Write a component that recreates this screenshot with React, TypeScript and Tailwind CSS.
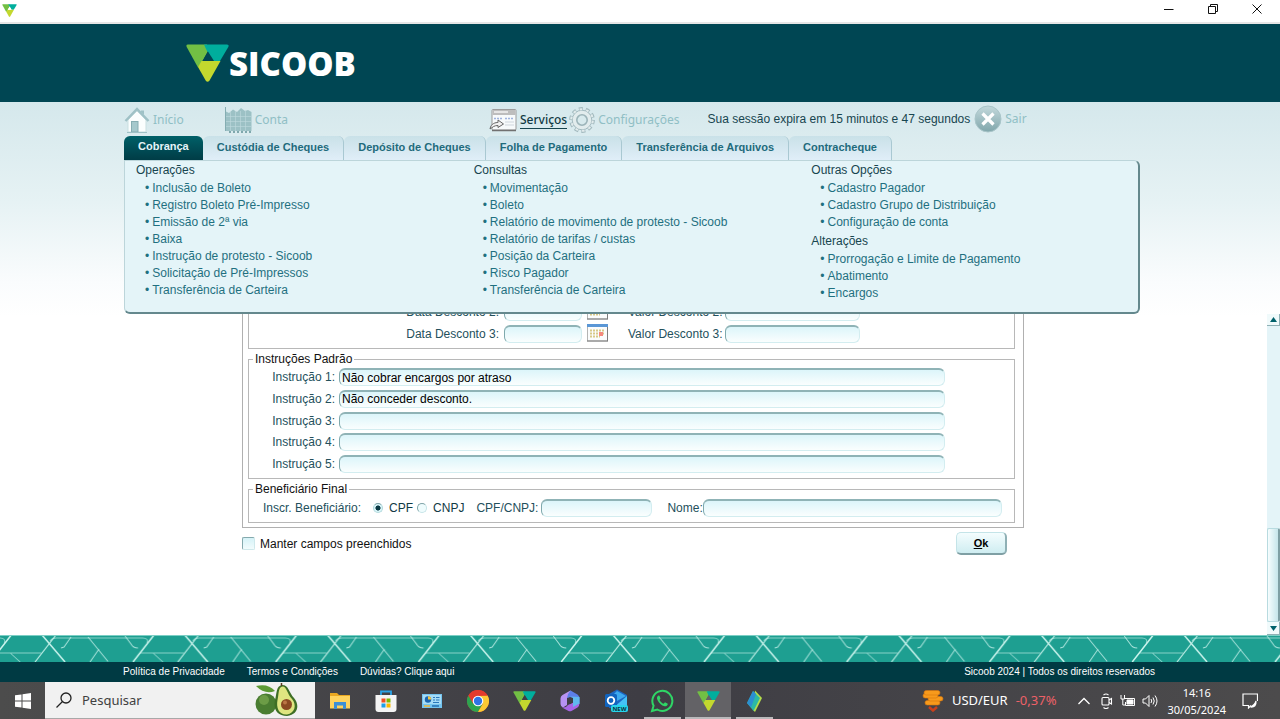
import React from "react";

const HEADER_TABS = [
  "Custódia de Cheques",
  "Depósito de Cheques",
  "Folha de Pagamento",
  "Transferência de Arquivos",
  "Contracheque",
];

type Section = { title: string; items: string[] };

const MENU: Section[][] = [
  [
    {
      title: "Operações",
      items: [
        "Inclusão de Boleto",
        "Registro Boleto Pré-Impresso",
        "Emissão de 2ª via",
        "Baixa",
        "Instrução de protesto - Sicoob",
        "Solicitação de Pré-Impressos",
        "Transferência de Carteira",
      ],
    },
  ],
  [
    {
      title: "Consultas",
      items: [
        "Movimentação",
        "Boleto",
        "Relatório de movimento de protesto - Sicoob",
        "Relatório de tarifas / custas",
        "Posição da Carteira",
        "Risco Pagador",
        "Transferência de Carteira",
      ],
    },
  ],
  [
    {
      title: "Outras Opções",
      items: ["Cadastro Pagador", "Cadastro Grupo de Distribuição", "Configuração de conta"],
    },
    {
      title: "Alterações",
      items: ["Prorrogação e Limite de Pagamento", "Abatimento", "Encargos"],
    },
  ],
];

const INSTRUCTIONS = ["Não cobrar encargos por atraso", "Não conceder desconto.", "", "", ""];

const INPUT =
  "h-[18px] rounded-md border border-t-2 border-[#d3edf0] border-t-[#8fb3b6] border-l-[#7fa9ad] bg-linear-to-b from-[#dcf5fa] to-[#fafefe] px-0.5 text-xs leading-[15px] text-black outline-none";

function Mark({ className, hole }: { className: string; hole: string }) {
  return (
    <svg viewBox="0 0 43 38" className={className} aria-hidden="true">
      <path d="M2 0.5H21L22 7L16.500 17L12 23.500L0.700 3Q-0.300 0.500 2 0.500Z" fill="#72bf44" />
      <path d="M18 0.5H41Q43.5 0.8 42.3 3L34 17H27L20.5 6Z" fill="#00ae9d" />
      <path d="M15.500 17H34.500L23.500 36.500Q21.500 39 19.700 36.500L12 23Z" fill="#c3d82e" />
      <path d="M22 7.500L28 17H16.500Z" fill={hole} />
    </svg>
  );
}

function HouseIcon() {
  return (
    <svg viewBox="0 0 26 26" className="size-[26px]" aria-hidden="true">
      <path d="M4 13V25H22V13L13 4Z" fill="#fbfefe" stroke="#c9dfe1" />
      <path d="M1.500 14L13 2L24.500 14" fill="none" stroke="#9fc1c6" strokeWidth="2.400" />
      <path d="M17 3.500H20V8L17 5Z" fill="#9fc1c6" />
      <rect x="7.500" y="14.500" width="6.500" height="10.500" fill="#a5c8cc" stroke="#86adb2" />
      <path d="M3 25.500H23" stroke="#9fc1c6" />
    </svg>
  );
}

function ChartIcon() {
  return (
    <svg viewBox="0 0 28 26" className="h-[26px] w-7" aria-hidden="true">
      <path d="M1.500 0V24H27.500V5L24 3L21 4L17 1L13 5L9 2.500L5 6L2 4.500Z" fill="#9cc1c5" />
      <path d="M6.500 5V24M11.500 4V24M16.500 4V24M21.500 3V24M2 9.500H27M2 14.500H27M2 19.500H27" stroke="#c0dadd" strokeOpacity="0.600" />
      <path d="M5 25H27" stroke="#7fa8ad" strokeWidth="2" strokeDasharray="2 2" />
      <path d="M1.500 0V24" stroke="#84adb2" />
    </svg>
  );
}

function ServicesIcon() {
  return (
    <svg viewBox="0 0 28 24" className="h-6 w-7" aria-hidden="true">
      <rect x="3" y="1.500" width="24" height="20.500" rx="1" fill="#f7fafb" stroke="#9b9b9b" />
      <path d="M3.500 2H26.500V7H3.500Z" fill="#bdbdbd" />
      <path d="M5 4H19" stroke="#f3f3f3" strokeWidth="1.500" />
      <path d="M5 10.500H14M16 10.500H25" stroke="#9fb3dd" strokeWidth="1.500" strokeDasharray="2 1" />
      <path d="M16 14H25M16 17H25" stroke="#cfd6dd" />
      <path d="M3 22.500H27" stroke="#717171" strokeWidth="1.500" />
      <path d="M1 21C2 15 7 14.500 9 14.500V12L14.500 16L9 19.500V17.500C5 17.500 4 19 1 21Z" fill="#f1f1f1" stroke="#666" />
    </svg>
  );
}

function GearIcon() {
  return (
    <svg viewBox="0 0 26 26" className="size-[26px]" aria-hidden="true">
      <circle cx="13" cy="13" r="11.200" fill="none" stroke="#a3babf" strokeWidth="3.400" strokeDasharray="4.030 3.008" />
      <circle cx="13" cy="13" r="9.800" fill="#e2eced" stroke="#a3babf" />
      <circle cx="13" cy="13" r="10.800" fill="none" stroke="#e2eced" strokeWidth="2" strokeDasharray="2.600 4.186" strokeDashoffset="-0.640" />
      <circle cx="13" cy="13" r="5.200" fill="#d8eaed" stroke="#9cb4b9" strokeWidth="1.600" />
    </svg>
  );
}

function ExitIcon() {
  return (
    <svg viewBox="0 0 28 28" className="size-7" aria-hidden="true">
      <defs>
        <linearGradient id="exit" x1="0" y1="0" x2="0" y2="1">
          <stop offset="0" stopColor="#c3d9dc" />
          <stop offset="1" stopColor="#80a6ab" />
        </linearGradient>
      </defs>
      <circle cx="14" cy="14" r="13" fill="url(#exit)" stroke="#a9c5c9" />
      <path d="M8.500 8.500L19.500 19.500M19.500 8.500L8.500 19.500" stroke="#fff" strokeWidth="3.200" />
    </svg>
  );
}

function CalendarIcon() {
  return (
    <svg viewBox="0 0 21 18" className="block h-[18px] w-[21px]" aria-hidden="true">
      <rect x="0.500" y="0.500" width="20" height="16.500" fill="#fbfcfc" stroke="#b4b4b4" />
      <path d="M0 0H21V3H0Z" fill="#5b97d6" />
      <path d="M0 17H21M20.500 3V17" stroke="#7d7d7d" />
      <path d="M3 6.500H18M3 9.500H18M3 12.500H13" stroke="#d8c987" strokeWidth="2" strokeDasharray="2 1" />
      <path d="M12 8H16V12H12Z" fill="#f5887d" />
    </svg>
  );
}

function NavItem({ label, icon, active }: { label: string; icon: React.ReactNode; active?: boolean }) {
  return (
    <a href="#" className="flex items-center gap-[3px] font-['Noto_Sans','Open_Sans',sans-serif] text-xs leading-4">
      {icon}
      <span className={active ? "border-b border-[#17454f] font-medium text-[#123a44]" : "text-[#90bfc5]"}>{label}</span>
    </a>
  );
}

function Patterned() {
  return (
    <svg className="block h-[27px] w-full bg-[#1e9f91]" aria-hidden="true">
      <defs>
        <g id="strokes" fill="none" stroke="#c9f3ec">
          <path d="M42 0L65 27M133 27L154 0" strokeWidth="1.500" />
          <path d="M56 0L35 27" strokeOpacity="0.900" strokeWidth="1.200" />
          <path d="M88 2L108 26.500M99 14L90 27M125 1L131 9Q133 13 138 13M71 2L64 12L61 13" strokeOpacity="0.800" />
          <path d="M50 6Q52 3 56 3H142Q149 3 147 8M140 18H184M153 18L163 27" strokeOpacity="0.600" />
        </g>
        <pattern id="tri" width="142.750" height="27" patternUnits="userSpaceOnUse">
          <use href="#strokes" />
          <use href="#strokes" x="-142.750" />
        </pattern>
      </defs>
      <rect width="100%" height="27" fill="url(#tri)" />
      <path d="M0 0.500H4000" stroke="#7ccfc5" />
    </svg>
  );
}

function Avocado() {
  return (
    <svg viewBox="0 0 44 34" className="h-[34px] w-11" aria-hidden="true">
      <path d="M1 3Q13 0 20 8Q10 12 1 3Z" fill="#5c9a34" />
      <ellipse cx="11" cy="21" rx="10.500" ry="10.500" fill="#4a7d31" />
      <ellipse cx="9" cy="17" rx="5" ry="5" fill="#7aa950" opacity="0.700" />
      <path d="M27 2C34 2 34 10 39 15C45 22 43 32 32 33C22 33 18 26 20 17C22 10 21 3 27 2Z" fill="#3f6f25" />
      <path d="M27.500 3.500C32 3.500 32 11 37 16C42 22 40 30 32 31.500C24 32 21 25 22.500 17C24 11 23 4 27.500 3.500Z" fill="#dfe580" />
      <circle cx="31.500" cy="21.500" r="5.500" fill="#8b4a22" />
      <circle cx="30" cy="19.500" r="2" fill="#bb7645" />
      <path d="M26.500 0V3" stroke="#5b3a1c" strokeWidth="1.500" />
    </svg>
  );
}

const APPS: { name: string; icon: React.ReactNode; state?: "open" | "active" }[] = [
  {
    name: "Explorador de Arquivos",
    icon: (
      <svg viewBox="0 0 22 22" className="size-[22px]">
        <path d="M1 3H8L10 5H21V18H1Z" fill="#e9a721" />
        <path d="M1 6H21V18.500H1Z" fill="#ffd35e" />
        <path d="M5 19V12H17V19H14V15.500H8V19Z" fill="#3d8fd6" />
      </svg>
    ),
  },
  {
    name: "Microsoft Store",
    icon: (
      <svg viewBox="0 0 22 22" className="size-[22px]">
        <path d="M6 6V1.500H16V6" fill="none" stroke="#2ba4e8" strokeWidth="1.800" />
        <path d="M0.500 5H21.500V19Q21.500 22 18.500 22H3.500Q0.500 22 0.500 19Z" fill="#f4f4f4" />
        <path d="M6.500 8.500H10.500V12.500H6.500Z" fill="#f04f23" />
        <path d="M11.500 8.500H15.500V12.500H11.500Z" fill="#7db900" />
        <path d="M6.500 13.500H10.500V17.500H6.500Z" fill="#1e9fe8" />
        <path d="M11.500 13.500H15.500V17.500H11.500Z" fill="#fbb800" />
      </svg>
    ),
  },
  {
    name: "Painel de Controle",
    icon: (
      <svg viewBox="0 0 22 22" className="size-[22px]">
        <path d="M1 4H21V18H1Z" fill="#74c4ef" />
        <path d="M2 5H20V14H2Z" fill="#a5dcf7" />
        <circle cx="7" cy="9.500" r="3.200" fill="#1a66b0" />
        <path d="M7 9.500V6.300A3.200 3.200 0 0 1 10.200 9.500Z" fill="#f4c542" />
        <path d="M12 7.500H14M15 7.500H18.500M12 10H14M15 10H18.500M12 12.500H18" stroke="#2a78bb" />
        <path d="M3 16H9" stroke="#f0b637" strokeWidth="1.500" />
        <path d="M11 16H18" stroke="#256fb2" strokeWidth="1.500" />
      </svg>
    ),
  },
  {
    name: "Google Chrome",
    icon: (
      <svg viewBox="0 0 22 22" className="size-[22px]">
        <circle cx="11" cy="11" r="11" fill="#e33b2e" />
        <path d="M1.470 5.500A11 11 0 0 0 11 22L16 13.500L6.700 13.500Z" fill="#2da44f" />
        <path d="M11 22A11 11 0 0 0 20.530 5.500L11 5.500L15.800 13.700Z" fill="#fcc934" />
        <path d="M1.470 5.500A11 11 0 0 1 20.530 5.500L11 6L6.200 13.700Z" fill="#e33b2e" />
        <circle cx="11" cy="11" r="5.300" fill="#fff" />
        <circle cx="11" cy="11" r="4.200" fill="#2f74e6" />
      </svg>
    ),
  },
  { name: "Sicoobnet", icon: <Mark className="h-5 w-[23px]" hole="#3f3e44" /> },
  {
    name: "Microsoft 365",
    icon: (
      <svg viewBox="0 0 22 22" className="size-[22px]">
        <path d="M11.500 0.500L3.500 5Q1.500 6 1.500 8.500V14Q1.500 16.500 4 17.500L8 15V8L14 4Z" fill="#b792f2" />
        <path d="M11.500 0.500L18.500 4.500Q20.500 6 20.500 8V14L14 10V7.500L8 8Q9 3 11.500 0.500Z" fill="#5c7fe8" />
        <path d="M20.500 13Q20.500 16 18.500 17.500L12.500 21Q11 21.500 9.500 21L3 17.500Q7 18 9 15L14 12.500V9.500Z" fill="#a765e4" />
        <path d="M20.500 7V13.500L14 17V8L11 6.500Z" fill="#60b9ed" />
        <path d="M8 8.500L11 7L14 8.500V12.500L11 14.300L8 12.500Z" fill="#3f3e44" />
      </svg>
    ),
  },
  {
    name: "Outlook",
    icon: (
      <svg viewBox="0 0 24 23" className="h-[23px] w-6">
        <path d="M5 5L13 0.500L23 6V19H5Z" fill="#1c67c3" />
        <path d="M13 2L22 7L13 12L8 7Z" fill="#3da9ef" />
        <path d="M23 7V19H9Z" fill="#45c2f5" />
        <rect x="1" y="5" width="12" height="13" rx="1.500" fill="#1164bf" />
        <circle cx="7" cy="11.500" r="3.300" fill="none" stroke="#fff" strokeWidth="1.800" />
        <rect x="7" y="16" width="17" height="7" rx="2" fill="#27d3ea" />
        <text x="15.500" y="22" textAnchor="middle" fontSize="6" fontWeight="700" fontFamily="Open Sans" fill="#0c3440">NEW</text>
      </svg>
    ),
  },
  {
    name: "WhatsApp",
    state: "open",
    icon: (
      <svg viewBox="0 0 24 24" className="size-6">
        <path d="M2 22L3.600 16.700A10 10 0 1 1 7.300 20.500Z" fill="none" stroke="#2fd566" strokeWidth="2" />
        <path d="M8.600 6.500C7 7 6.500 9 7.500 11C9 14.300 11.500 16.500 14.500 17.300C16.500 17.600 17.800 16.300 17.800 14.700L15 13.200L13.600 14.700C11.800 14 10.500 12.800 9.500 10.900L10.500 9.500L9.500 6.800Z" fill="#2fd566" />
      </svg>
    ),
  },
  { name: "Sicoobnet Empresarial", state: "active", icon: <Mark className="h-5 w-[23px]" hole="#636266" /> },
  {
    name: "Leitor",
    state: "open",
    icon: (
      <svg viewBox="0 0 20 22" className="h-[22px] w-5">
        <path d="M11 0.500L18 8L11 22L9 20Z" fill="#b4dd4a" />
        <path d="M9 1L16 8L9.500 21L3 13Z" fill="#2cb8a5" />
        <path d="M9 1L12 4L7 17.500L3 13Z" fill="#2b8ed2" />
      </svg>
    ),
  },
];

function Coins() {
  return (
    <svg viewBox="0 0 22 22" className="size-[22px]" aria-hidden="true">
      <g fill="#f79a1c" stroke="#d9760c" strokeWidth="0.600">
        <rect x="3" y="10.500" width="15" height="4.500" rx="2.200" />
        <rect x="6" y="6.500" width="15" height="4.500" rx="2.200" />
        <rect x="1" y="3.500" width="15" height="4.500" rx="2.200" />
        <rect x="2" y="0.500" width="16" height="4.500" rx="2.200" />
      </g>
      <path d="M7 17L11 20.500L15 17" fill="none" stroke="#c8401b" strokeWidth="2.500" />
    </svg>
  );
}

export default function App() {
  return (
    <div className="flex min-h-screen flex-col bg-white font-['Liberation_Sans',Arial,sans-serif] text-xs text-[#24505c]">
      <div className="flex h-[22px] shrink-0 items-center justify-between pr-[17px] pl-0.5">
        <Mark className="mb-0.5 h-[13px] w-[15px]" hole="#fff" />
        <div className="mb-1 flex gap-8">
          <button type="button" aria-label="Minimizar">
            <svg viewBox="0 0 12 12" className="size-3"><path d="M1 6.500H10.500" stroke="#111" /></svg>
          </button>
          <button type="button" aria-label="Restaurar">
            <svg viewBox="0 0 12 12" className="size-3" fill="none" stroke="#111">
              <path d="M1.500 3.500H8.500V10.500H1.500ZM3.500 3.500V1.500H10.500V8.500H8.500" />
            </svg>
          </button>
          <button type="button" aria-label="Fechar">
            <svg viewBox="0 0 12 12" className="size-3"><path d="M1.500 1.500L10.500 10.500M10.500 1.500L1.500 10.500" stroke="#111" /></svg>
          </button>
        </div>
      </div>

      <header className="h-20 shrink-0 border-t-2 border-[#e6e6e6] bg-[#004653] pr-4">
        <div className="mx-auto flex h-full max-w-[1016px] items-center pl-[62px]">
          <Mark className="h-[38px] w-[43px]" hole="#004653" />
          <span className="font-['Open_Sans','Noto_Sans',sans-serif] text-[33px] leading-none font-extrabold text-white">SICOOB</span>
        </div>
      </header>

      <main className="flex flex-1 flex-col bg-[linear-gradient(#d5e8ec_0px,#e6f2f4_100px,#fafcfd_180px,#ffffff_215px)]">
        <div className="w-full pr-4">
          <nav className="mx-auto max-w-[1016px]">
            <div className="flex h-[34px] items-end pb-[3px]">
              <div className="flex w-[365px] items-center gap-10">
                <NavItem label="Início" icon={<HouseIcon />} />
                <NavItem label="Conta" icon={<ChartIcon />} />
              </div>
              <div className="flex items-center gap-0.5">
                <NavItem label="Serviços" icon={<ServicesIcon />} active />
                <NavItem label="Configurações" icon={<GearIcon />} />
              </div>
              <span className="ml-7 flex h-7 items-center text-[#17454f]">Sua sessão expira em 15 minutos e 47 segundos</span>
              <span className="w-1" />
              <NavItem label="Sair" icon={<ExitIcon />} />
            </div>
            <div className="flex h-6 text-[11px] font-bold">
              <a href="#" className="rounded-t-md bg-linear-to-b from-[#006068] to-[#003c46] px-3.5 leading-5 text-[#e4f4f8]">
                Cobrança
              </a>
              {HEADER_TABS.map((tab) => (
                <a
                  key={tab}
                  href="#"
                  className="rounded-t-md border-r border-[#a9c8d2] bg-linear-to-b from-[#c9e1e8] to-[#e0eef8] px-3.5 leading-[22px] text-[#1f6b7c]"
                >
                  {tab}
                </a>
              ))}
            </div>
          </nav>

          <div className="mx-auto grid max-w-[1016px] grid-cols-3 rounded-tr-md rounded-b-md border border-r-2 border-b-2 border-[#bcd5da] border-r-[#64888d] border-b-[#64888d] bg-[#e4f4f8] pb-2.5">
            {MENU.map((sections, i) => (
              <div key={i} className="flex flex-col gap-px pl-[11px]">
                {sections.map((section) => (
                  <section key={section.title}>
                    <h2 className="mb-px leading-[18px] text-[#17454f]">{section.title}</h2>
                    <ul className="pl-[9px]">
                      {section.items.map((item) => (
                        <li key={item} className="flex gap-[3px] leading-[17px] text-[#1f7080]">
                          <span aria-hidden="true">•</span>
                          <a href="#">{item}</a>
                        </li>
                      ))}
                    </ul>
                  </section>
                ))}
              </div>
            ))}
          </div>
        </div>

        <div className="flex flex-1 overflow-hidden">
          <form className="min-w-0 flex-1 pr-px" onSubmit={(e) => e.preventDefault()}>
            <div className="mx-auto -mt-[22px] max-w-[782px]">
              <div className="border border-[#b0b0b0] pr-2 pb-1 pl-[5px]">
                <fieldset className="border border-[#b8b8b8] pt-[9px] pb-[5px]">
                  <div className="flex flex-col gap-1">
                    {[2, 3].map((n) => (
                      <div key={n} className="flex h-[18px] items-center">
                        <label htmlFor={`data${n}`} className="w-[250px] text-right">Data Desconto {n}:</label>
                        <input id={`data${n}`} type="text" className={`${INPUT} ml-[5px] w-[78px]`} />
                        <button type="button" aria-label="Calendário" className="-mt-0.5 ml-[5px]">
                          <CalendarIcon />
                        </button>
                        <label htmlFor={`valor${n}`} className="ml-5">Valor Desconto {n}:</label>
                        <input id={`valor${n}`} type="text" className={`${INPUT} ml-0.5 w-[135px]`} />
                      </div>
                    ))}
                  </div>
                </fieldset>

                <fieldset className="mt-px border border-[#b8b8b8] pb-[5px]">
                  <legend className="ml-1 px-0.5 leading-[18px] text-[#111]">Instruções Padrão</legend>
                  <div className="flex h-[105px] flex-col justify-between">
                    {INSTRUCTIONS.map((text, i) => (
                      <div key={i} className="flex items-center">
                        <label htmlFor={`instr${i}`} className="w-[86px] text-right">Instrução {i + 1}:</label>
                        <input id={`instr${i}`} type="text" defaultValue={text} className={`${INPUT} ml-1 w-[606px]`} />
                      </div>
                    ))}
                  </div>
                </fieldset>

                <fieldset className="mt-px border border-[#b8b8b8] pb-1">
                  <legend className="ml-1 px-0.5 leading-[18px] text-[#111]">Beneficiário Final</legend>
                  <div className="flex h-5 items-center pl-3.5">
                    <span>Inscr. Beneficiário:</span>
                    <label className="ml-3 flex items-center gap-1.5 text-[#123a44]">
                      <input
                        type="radio"
                        name="tipo"
                        defaultChecked
                        className="size-2.5 appearance-none rounded-full border border-[#b5dadd] border-t-[#7fa4a8] bg-[#d8f4f8] checked:bg-[radial-gradient(#0b3a44_40%,#d8f4f8_50%)]"
                      />
                      CPF
                    </label>
                    <label className="ml-1 flex items-center gap-1.5 text-[#123a44]">
                      <input
                        type="radio"
                        name="tipo"
                        className="size-2.5 appearance-none rounded-full border border-[#c5e4e7] border-t-[#7fa4a8] border-l-[#7fa4a8] bg-[#effcfd] checked:bg-[radial-gradient(#0b3a44_40%,#d8f4f8_50%)]"
                      />
                      CNPJ
                    </label>
                    <label htmlFor="doc" className="ml-3">CPF/CNPJ:</label>
                    <input id="doc" type="text" className={`${INPUT} ml-[3px] w-[111px]`} />
                    <label htmlFor="nome" className="ml-[15px]">Nome:</label>
                    <input id="nome" type="text" className={`${INPUT} w-[299px]`} />
                  </div>
                </fieldset>
              </div>
              <div className="flex items-center justify-between pt-1 pr-[17px]">
                <label className="flex items-center gap-[5px] text-[#111]">
                  <input
                    type="checkbox"
                    className="size-[13px] appearance-none rounded-xs border border-[#cfe8eb] border-t-[#84a9ad] border-l-[#84a9ad] bg-linear-to-b from-[#d5f2f7] to-[#f2fcfd] checked:bg-[#17454f]"
                  />
                  Manter campos preenchidos
                </label>
                <button
                  type="submit"
                  className="h-[23px] w-[51px] rounded-[5px] border border-r-2 border-b-2 border-[#c4e4e8] border-r-[#8fb0b5] border-b-[#7f9fa4] bg-linear-to-b from-[#f4fdfe] to-[#cfedf1] text-[11px] leading-none font-bold text-black"
                >
                  <span className="underline">O</span>k
                </button>
              </div>
            </div>
          </form>
          <div className="flex w-[13px] flex-col bg-[#e4f4f8]" aria-hidden="true">
            <span className="flex h-3 items-center justify-center border-r border-b border-[#8fb0b5] bg-[#f0fafb]">
              <svg viewBox="0 0 7 5" className="h-[5px] w-[7px]"><path d="M0 5L3.500 0L7 5Z" fill="#00616b" /></svg>
            </span>
            <span className="flex-1" />
            <span className="h-[94px] rounded-xs border border-r-2 border-[#b8dbe0] border-r-[#7f9fa4] bg-linear-to-r from-[#f6fdfe] to-[#c6e5ea]" />
            <span className="flex h-[13px] items-center justify-center border-r border-b border-[#8fb0b5] bg-[#f0fafb]">
              <svg viewBox="0 0 7 5" className="h-[5px] w-[7px]"><path d="M0 0L3.500 5L7 0Z" fill="#00616b" /></svg>
            </span>
          </div>
        </div>
      </main>

      <footer className="shrink-0">
        <Patterned />
        <div className="bg-[#003a43] pr-4 text-[10px] leading-5 text-white">
          <div className="mx-auto flex max-w-[1034px] justify-between pl-2">
            <div className="flex gap-[22px]">
              <a href="#">Política de Privacidade</a>
              <a href="#">Termos e Condições</a>
              <a href="#">Dúvidas? Clique aqui</a>
            </div>
            <span className="-mr-1.5">Sicoob 2024 | Todos os direitos reservados</span>
          </div>
        </div>
      </footer>

      <div className="flex h-[37px] shrink-0 bg-linear-to-r from-[#4c4c4c] via-[#3e3d44] to-[#4c4b4c] font-['Noto_Sans','Open_Sans',sans-serif] text-white">
        <button type="button" aria-label="Iniciar" className="flex w-[45px] items-center justify-center">
          <svg viewBox="0 0 16 16" className="size-4" fill="#fff">
            <path d="M0 2.300L6.500 1.400V7.500H0ZM7.500 1.200L16 0V7.500H7.500ZM0 8.500H6.500V14.600L0 13.700ZM7.500 8.500H16V16L7.500 14.800Z" />
          </svg>
        </button>
        <label className="flex w-[270px] items-center border-b border-[#a8a8a8] bg-[#f1f1f1] pl-[11px]">
          <svg viewBox="0 0 16 16" className="size-4" fill="none" stroke="#222" strokeWidth="1.300">
            <circle cx="10" cy="6" r="5" />
            <path d="M6.500 9.500L0.500 15.500" />
          </svg>
          <input
            type="text"
            aria-label="Pesquisar"
            placeholder="Pesquisar"
            className="mt-0.5 ml-2.5 w-[173px] bg-transparent text-[13px] outline-none placeholder:text-[#404040]"
          />
          <Avocado />
        </label>
        <div className="ml-0.5 flex">
          {APPS.map((app) => (
            <button
              key={app.name}
              type="button"
              aria-label={app.name}
              className={
                app.state === "active"
                  ? "flex w-[46px] items-center justify-center border-b-2 border-[#b9b9bb] bg-[#636266] pt-0.5"
                  : "flex w-[46px] flex-col items-center justify-center"
              }
            >
              {app.state === "open" ? (
                <>
                  <span className="flex h-[35px] items-center pt-0.5">{app.icon}</span>
                  <span className="h-0.5 w-[37px] bg-[#b9b9bb]" />
                </>
              ) : (
                app.icon
              )}
            </button>
          ))}
        </div>
        <div className="ml-auto flex items-center text-[13px]">
          <Coins />
          <span className="ml-2">USD/EUR</span>
          <span className="ml-2 text-[#ee6168]">-0,37%</span>
          <div className="ml-[22px] flex items-center gap-1.5">
            <svg viewBox="0 0 12 8" className="h-2 w-3" fill="none" stroke="#fff" strokeWidth="1.300"><path d="M0.500 7L6 1.500L11.500 7" /></svg>
            <svg viewBox="0 0 14 16" className="ml-1 h-4 w-3.5" fill="none" stroke="#fff" strokeWidth="1.100">
              <rect x="2" y="4.500" width="7" height="7.500" rx="1" />
              <path d="M9 7L11.500 5.500V11L9 9.500M3.500 2Q6 0 8.500 2M3.500 14.500Q6 16.500 8.500 14.500" />
            </svg>
            <svg viewBox="0 0 16 14" className="h-3.5 w-4" fill="none" stroke="#fff">
              <path d="M4.500 4.500H14.500V11.500H5.500V8M1 1V5H4.500V1M2.800 5V11H5" />
              <path d="M7 6H13V10H7Z" fill="#fff" />
            </svg>
            <svg viewBox="0 0 17 14" className="h-3.5 w-[17px]" fill="none" stroke="#fff">
              <path d="M1 5H3.500L7 1.500V12.500L3.500 9H1ZM9 5Q10.500 7 9 9M11 3.500Q13.500 7 11 10.500M13 1.500Q17 7 13 12.500" />
            </svg>
          </div>
          <div className="ml-2 flex flex-col items-center text-[11px] leading-[17px]">
            <span>14:16</span>
            <span>30/05/2024</span>
          </div>
          <svg viewBox="0 0 16 16" className="mr-[22px] ml-4 size-4" fill="none" stroke="#fff" strokeWidth="1.200">
            <path d="M9 12.500L6.500 15V12.500H1V1H15.500V8" />
            <path d="M14 8Q14.500 14.500 8.500 14Q13 12 14 8Z" fill="#fff" />
          </svg>
        </div>
      </div>
    </div>
  );
}
